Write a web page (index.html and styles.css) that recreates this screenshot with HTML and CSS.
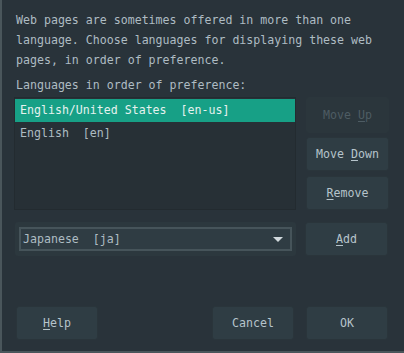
FILE: index.html
```html
<!DOCTYPE html>
<html lang="en">

<head>
    <meta charset="UTF-8" />
    <meta name="viewport" content="width=device-width" />
    <link rel="stylesheet" href="styles.css">
</head>

<body>
    <div class="window">
        <p class="intro">Web pages are sometimes offered in more than one language. Choose languages for displaying these web pages, in order of preference.</p>
        <div class="label">Languages in order of preference:</div>

        <div class="main_row">
            <div class="lang_list">
                <div class="lang_row selected">English/United States  [en-us]</div>
                <div class="lang_row">English  [en]</div>
            </div>
            <div class="side_buttons">
                <button class="btn" disabled>Move <u>U</u>p</button>
                <button class="btn">Move <u>D</u>own</button>
                <button class="btn"><u>R</u>emove</button>
            </div>
        </div>

        <div class="combo_row">
            <div class="combo">
                <div class="combo_inner">
                    <span class="combo_text">Japanese  [ja]</span>
                    <span class="arrow"></span>
                </div>
            </div>
            <button class="btn add_btn"><u>A</u>dd</button>
        </div>

        <div class="footer">
            <button class="btn"><u>H</u>elp</button>
            <div class="spacer"></div>
            <button class="btn">Cancel</button>
            <button class="btn">OK</button>
        </div>
    </div>
</body>

</html>
```

FILE: styles.css
```css
/* === language dialog === */

body {
    margin: 0;
    background: #29333a;
    font-family: "DejaVu Sans Mono", "Liberation Mono", monospace;
    font-size: 11.6px;
    color: #aebcc3;
}

.window {
    /* dialog frame */
    box-sizing: border-box;
    width: 404px;
    height: 353px;
    padding: 10px 15px 0 12px;
    border-left: 2px solid #4a565b;
    border-bottom: 2px solid #4a565b;
    background: #29333a;
}

.intro {
    margin: 0;
    padding-left: 2px;
    line-height: 20px;
}

.label {
    margin-top: 5px;
    padding-left: 2px;
    line-height: 20px;
}

.main_row {
    display: flex;
    gap: 10px;
    margin-top: 2px;
}

.lang_list {
    /* list box */
    box-sizing: border-box;
    width: 282px;
    height: 113px;
    padding-top: 1px;
    background: #273036;
    border: 1px solid #232b30;
}

.lang_row {
    height: 23px;
    line-height: 23px;
    padding-left: 5px;
    white-space: pre;
}

.lang_row.selected {
    background: #17a086;
    color: #e6f2ef;
}

.side_buttons {
    display: flex;
    flex-direction: column;
    gap: 5px;
}

.btn {
    /* flat dark button */
    box-sizing: border-box;
    width: 83px;
    height: 34px;
    padding: 0;
    border: 1px solid #2a353b;
    border-radius: 3px;
    background: #2f3d44;
    color: #b6c4cb;
    font-family: inherit;
    font-size: inherit;
    white-space: pre;
}

.btn u {
    text-underline-offset: 2px;
}

.btn:disabled {
    background: #2b363c;
    border-color: #2b363c;
    color: #4e5c63;
}

.side_buttons .btn:first-child {
    height: 36px;
    margin-bottom: -1px;
}

.combo_row {
    display: flex;
    gap: 10px;
    margin-top: 12px;
}

.combo {
    /* dropdown frame */
    box-sizing: border-box;
    width: 281px;
    height: 34px;
    margin-left: 1px;
    padding: 5px 4px;
    border-radius: 3px;
    background: #2c383e;
}

.combo_inner {
    box-sizing: border-box;
    height: 24px;
    display: flex;
    align-items: center;
    justify-content: space-between;
    padding: 0 7px 0 2px;
    border: 2px solid #46545a;
    background: #2f3c43;
}

.combo_text {
    white-space: pre;
}

.arrow {
    /* small down triangle */
    width: 0;
    height: 0;
    border-left: 5px solid transparent;
    border-right: 5px solid transparent;
    border-top: 5px solid #d2dade;
}

.add_btn {
    margin-left: -1px;
}

.footer {
    display: flex;
    gap: 12px;
    margin-top: 50px;
    padding: 0 1px 0 2px;
}

.footer .btn {
    width: 82px;
}

.spacer {
    flex: 1;
}
```
